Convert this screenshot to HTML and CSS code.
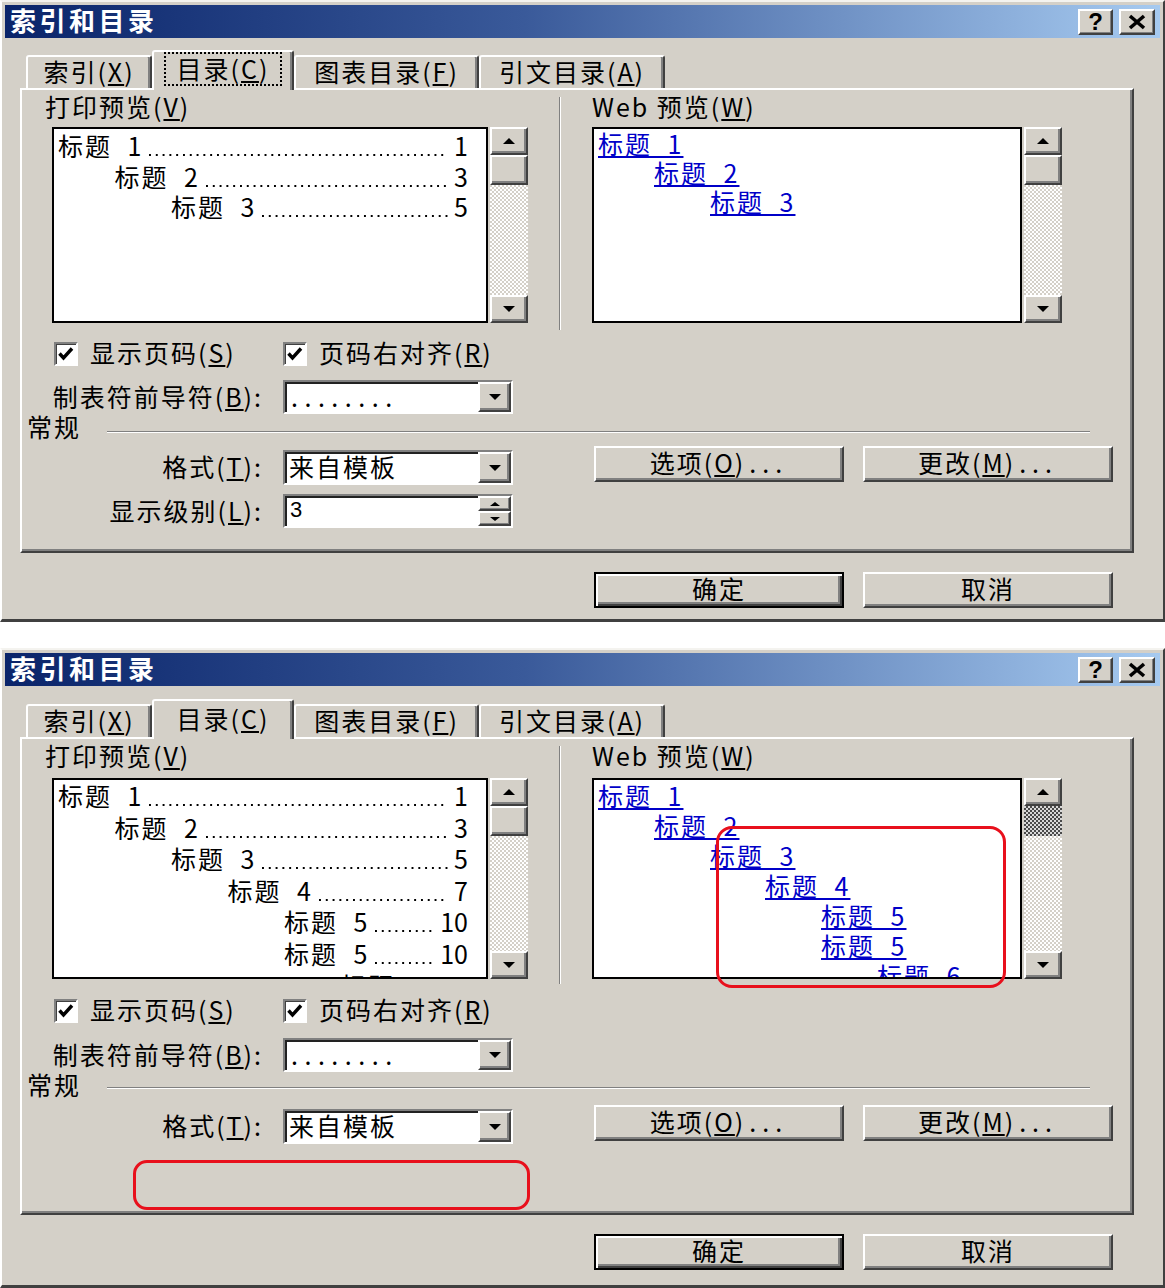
FILE: index.html
```html
<!DOCTYPE html>
<html lang="zh-CN">
<head>
<meta charset="utf-8">
<title>索引和目录</title>
<link rel="stylesheet" href="styles.css">
</head>
<body>
<div class="dialog d1">
  <div class="titlebar">
    <span class="title">索引和目录</span>
    <div class="tb-btns">
      <span class="tb-btn help">?</span>
      <span class="tb-btn close"><svg width="18" height="16" viewBox="0 0 18 16"><path d="M2 2L16 14M16 2L2 14" stroke="#000" stroke-width="3.6"/></svg></span>
    </div>
  </div>
  <div class="tabs">
    <div class="tab t1">索引(<u>X</u>)</div>
    <div class="tab t2 sel"><span class="focus">目录(<u>C</u>)</span></div>
    <div class="tab t3">图表目录(<u>F</u>)</div>
    <div class="tab t4">引文目录(<u>A</u>)</div>
  </div>
  <div class="panel">
    <div class="previews">
      <div class="pcol left">
        <div class="plabel">打印预览(<u>V</u>)</div>
        <div class="listwrap">
          <div class="listbox">
            <ul class="plist">
              <li class="pitem lv0"><span class="nm">标题 1</span><span class="lead"></span><span class="pg">1</span></li>
              <li class="pitem lv1"><span class="nm">标题 2</span><span class="lead"></span><span class="pg">3</span></li>
              <li class="pitem lv2"><span class="nm">标题 3</span><span class="lead"></span><span class="pg">5</span></li>
            </ul>
          </div>
          <div class="sb">
            <div class="sb-btn"><i class="tri-up"></i></div>
            <div class="sb-thumb"></div>
            <div class="sb-track"></div>
            <div class="sb-btn"><i class="tri-dn"></i></div>
          </div>
        </div>
      </div>
      <div class="vsep"></div>
      <div class="pcol right">
        <div class="plabel">Web 预览(<u>W</u>)</div>
        <div class="listwrap">
          <div class="listbox web">
            <ul class="wlist">
              <li class="witem lv0"><a>标题 1</a></li>
              <li class="witem lv1"><a>标题 2</a></li>
              <li class="witem lv2"><a>标题 3</a></li>
            </ul>
          </div>
          <div class="sb">
            <div class="sb-btn"><i class="tri-up"></i></div>
            <div class="sb-thumb"></div>
            <div class="sb-track"></div>
            <div class="sb-btn"><i class="tri-dn"></i></div>
          </div>
        </div>
      </div>
    </div>
    <div class="cbrow">
      <div class="cb cb1"><span class="cbox"><svg width="20" height="20" viewBox="0 0 20 20"><path d="M3.5 9.5L7.5 14L16 4.5" fill="none" stroke="#000" stroke-width="3.4"/></svg></span><span class="cbl">显示页码(<u>S</u>)</span></div>
      <div class="cb cb2"><span class="cbox"><svg width="20" height="20" viewBox="0 0 20 20"><path d="M3.5 9.5L7.5 14L16 4.5" fill="none" stroke="#000" stroke-width="3.4"/></svg></span><span class="cbl">页码右对齐(<u>R</u>)</span></div>
    </div>
    <div class="frow r-leader">
      <span class="flabel">制表符前导符(<u>B</u>):</span>
      <div class="combo"><span class="cval dots">........</span><span class="cbtn"><i class="tri-dn"></i></span></div>
    </div>
    <div class="genrow"><span class="gen">常规</span><span class="hline"></span></div>
    <div class="frow r-fmt">
      <span class="flabel">格式(<u>T</u>):</span>
      <div class="combo"><span class="cval">来自模板</span><span class="cbtn"><i class="tri-dn"></i></span></div>
      <div class="btns"><span class="btn">选项(<u>O</u>)<span class="ell">...</span></span><span class="btn">更改(<u>M</u>)<span class="ell">...</span></span></div>
    </div>
    <div class="frow r-lvl">
      <span class="flabel">显示级别(<u>L</u>):</span>
      <div class="combo spin"><span class="cval num">3</span><span class="spbtns"><span class="spb"><i class="tri-up sm"></i></span><span class="spb"><i class="tri-dn sm"></i></span></span></div>
    </div>
  </div>
  <div class="footer">
    <span class="btn default">确定</span>
    <span class="btn">取消</span>
  </div>
</div>

<div class="gap"></div>

<div class="dialog d2">
  <div class="titlebar">
    <span class="title">索引和目录</span>
    <div class="tb-btns">
      <span class="tb-btn help">?</span>
      <span class="tb-btn close"><svg width="18" height="16" viewBox="0 0 18 16"><path d="M2 2L16 14M16 2L2 14" stroke="#000" stroke-width="3.6"/></svg></span>
    </div>
  </div>
  <div class="tabs">
    <div class="tab t1">索引(<u>X</u>)</div>
    <div class="tab t2 sel"><span class="nofocus">目录(<u>C</u>)</span></div>
    <div class="tab t3">图表目录(<u>F</u>)</div>
    <div class="tab t4">引文目录(<u>A</u>)</div>
  </div>
  <div class="panel">
    <div class="previews">
      <div class="pcol left">
        <div class="plabel">打印预览(<u>V</u>)</div>
        <div class="listwrap">
          <div class="listbox">
            <ul class="plist">
              <li class="pitem lv0"><span class="nm">标题 1</span><span class="lead"></span><span class="pg">1</span></li>
              <li class="pitem lv1"><span class="nm">标题 2</span><span class="lead"></span><span class="pg">3</span></li>
              <li class="pitem lv2"><span class="nm">标题 3</span><span class="lead"></span><span class="pg">5</span></li>
              <li class="pitem lv3"><span class="nm">标题 4</span><span class="lead"></span><span class="pg">7</span></li>
              <li class="pitem lv4"><span class="nm">标题 5</span><span class="lead"></span><span class="pg">10</span></li>
              <li class="pitem lv4"><span class="nm">标题 5</span><span class="lead"></span><span class="pg">10</span></li>
              <li class="pitem lv5"><span class="nm">标题 6</span><span class="lead"></span><span class="pg">12</span></li>
            </ul>
          </div>
          <div class="sb">
            <div class="sb-btn"><i class="tri-up"></i></div>
            <div class="sb-thumb"></div>
            <div class="sb-track"></div>
            <div class="sb-btn"><i class="tri-dn"></i></div>
          </div>
        </div>
      </div>
      <div class="vsep"></div>
      <div class="pcol right">
        <div class="plabel">Web 预览(<u>W</u>)</div>
        <div class="listwrap">
          <div class="listbox web">
            <ul class="wlist">
              <li class="witem lv0"><a>标题 1</a></li>
              <li class="witem lv1"><a>标题 2</a></li>
              <li class="witem lv2"><a>标题 3</a></li>
              <li class="witem lv3"><a>标题 4</a></li>
              <li class="witem lv4"><a>标题 5</a></li>
              <li class="witem lv4"><a>标题 5</a></li>
              <li class="witem lv5"><a>标题 6</a></li>
            </ul>
          </div>
          <div class="sb">
            <div class="sb-btn"><i class="tri-up"></i></div>
            <div class="sb-thumb dither"></div>
            <div class="sb-track"></div>
            <div class="sb-btn"><i class="tri-dn"></i></div>
          </div>
        </div>
      </div>
    </div>
    <div class="cbrow">
      <div class="cb cb1"><span class="cbox"><svg width="20" height="20" viewBox="0 0 20 20"><path d="M3.5 9.5L7.5 14L16 4.5" fill="none" stroke="#000" stroke-width="3.4"/></svg></span><span class="cbl">显示页码(<u>S</u>)</span></div>
      <div class="cb cb2"><span class="cbox"><svg width="20" height="20" viewBox="0 0 20 20"><path d="M3.5 9.5L7.5 14L16 4.5" fill="none" stroke="#000" stroke-width="3.4"/></svg></span><span class="cbl">页码右对齐(<u>R</u>)</span></div>
    </div>
    <div class="frow r-leader">
      <span class="flabel">制表符前导符(<u>B</u>):</span>
      <div class="combo"><span class="cval dots">........</span><span class="cbtn"><i class="tri-dn"></i></span></div>
    </div>
    <div class="genrow"><span class="gen">常规</span><span class="hline"></span></div>
    <div class="frow r-fmt">
      <span class="flabel">格式(<u>T</u>):</span>
      <div class="combo"><span class="cval">来自模板</span><span class="cbtn"><i class="tri-dn"></i></span></div>
      <div class="btns"><span class="btn">选项(<u>O</u>)<span class="ell">...</span></span><span class="btn">更改(<u>M</u>)<span class="ell">...</span></span></div>
    </div>
  </div>
  <div class="footer">
    <span class="btn default">确定</span>
    <span class="btn">取消</span>
  </div>
  <div class="mark mark-web"></div>
  <div class="mark mark-lvl"></div>
</div>
</body>
</html>
```
FILE: styles.css
```css
* { box-sizing: border-box; }

html, body { margin: 0; padding: 0; background: #fff; }

body {
  width: 1165px;
  font-family: "Noto Sans CJK SC", "Liberation Sans", sans-serif;
  font-size: 25px;
  letter-spacing: 2px;
  color: #000;
}

u { text-decoration: underline; text-underline-offset: 2px; text-decoration-thickness: 2px; }

.dialog {
  position: relative;
  width: 1165px;
  background: #d4d0c8;
  border: 2px solid;
  border-color: #f4f3ef #404040 #404040 #fff;
  border-bottom-width: 3px;
  padding: 3px 3px var(--pad-b);
}

.d1 {
  --tabs-mt: 12px; --panel-h: 465px; --list-h: 196px; --list-mt: 7px;
  --cb-mt: 19px; --r1-mt: 14px; --gen-h: 32px; --gen-line: 17px;
  --plh: 30.5px; --ppt: 1px; --wlh: 29px; --wpt: 0px; --pad-b: 11px; --sep-h: 233px;
}
.d2 {
  --tabs-mt: 13px; --panel-h: 478px; --list-h: 201px; --list-mt: 9px;
  --cb-mt: 20px; --r1-mt: 15px; --gen-h: 33px; --gen-line: 15px;
  --plh: 31.6px; --ppt: 0px; --wlh: 30px; --wpt: 0px; --pad-b: 15px; --sep-h: 238px;
}

.gap { height: 26px; }

/* title bar */
.titlebar {
  height: 33px;
  display: flex;
  align-items: center;
  justify-content: space-between;
  padding: 0 5px;
  background: linear-gradient(to right, #0a246a 0%, #3a5a9a 45%, #a6caf0 100%);
}
.title {
  color: #fff;
  font-weight: 700;
  font-size: 26px;
  letter-spacing: 3.5px;
  line-height: 30px;
  padding-bottom: 3px;
}
.tb-btns { display: flex; gap: 6px; }
.tb-btn {
  width: 36px;
  height: 26px;
  background: #d4d0c8;
  border: 2px solid;
  border-color: #fff #404040 #404040 #fff;
  box-shadow: inset -1px -1px 0 #808080;
  display: flex;
  align-items: center;
  justify-content: center;
}
.tb-btn.help {
  width: 35px;
  font-family: "Liberation Sans", sans-serif;
  font-weight: 700;
  font-size: 24px;
  letter-spacing: 0;
  line-height: 1;
}

/* tabs */
.tabs {
  display: flex;
  align-items: flex-end;
  height: 38px;
  margin-top: var(--tabs-mt);
  padding-left: 21px;
}
.tab {
  height: 33px;
  display: flex;
  align-items: center;
  justify-content: center;
  padding-bottom: 4px;
  background: #d4d0c8;
  border: 2px solid;
  border-bottom: 0;
  border-color: #fff #404040 transparent #fff;
  border-radius: 3px 3px 0 0;
  box-shadow: inset -2px 0 0 #808080;
  white-space: nowrap;
}
.t1 { width: 126px; }
.t2 { width: 142px; }
.t3 { width: 185px; }
.t4 { width: 186px; }
.tab.sel {
  height: 40px;
  padding-bottom: 5px;
  margin-bottom: -2px;
  position: relative;
  z-index: 1;
}
.focus {
  outline: 2px dotted #000;
  outline-offset: 0;
  padding: 0 11px 1px;
  line-height: 29px;
}
.nofocus { padding: 0 11px; line-height: 30px; }

/* panel */
.panel {
  margin-left: 15px;
  width: 1114px;
  height: var(--panel-h);
  border: 2px solid;
  border-color: #fff #404040 #404040 #fff;
  box-shadow: inset -2px -2px 0 #808080;
}

.previews {
  display: flex;
  align-items: flex-start;
  padding-top: 6px;
}
.pcol.left { margin-left: 23px; width: 483px; }
.pcol.left .listwrap { margin-left: 7px; }
.pcol.right { margin-left: 31px; }
.plabel { height: 24px; line-height: 20px; white-space: nowrap; }
.vsep {
  margin-left: 31px;
  margin-top: 1px;
  margin-bottom: -30px;
  width: 2px;
  height: var(--sep-h);
  border-left: 1px solid #808080;
  border-right: 1px solid #fff;
}

.listwrap {
  display: flex;
  gap: 2px;
  margin-top: var(--list-mt);
  height: var(--list-h);
}
.listbox {
  width: 436px;
  height: 100%;
  background: #fff;
  border: 2px solid #000;
  overflow: hidden;
}
.listbox.web { width: 430px; }

.plist {
  list-style: none;
  margin: 0;
  padding: var(--ppt) 18px 0 4px;
  line-height: var(--plh);
}
.pitem {
  display: flex;
  align-items: baseline;
  white-space: nowrap;
  height: var(--plh);
}
.nm { word-spacing: 8px; }
.lead {
  flex: 1;
  height: 2px;
  margin: 0 6px 0 6px;
  background-image: linear-gradient(to right, #000 2px, transparent 2px);
  background-size: 6.8px 2px;
  background-repeat: repeat-x;
}
.pg { letter-spacing: 0; }

.lv0 { padding-left: 0; }
.lv1 { padding-left: 56.5px; }
.lv2 { padding-left: 113px; }
.lv3 { padding-left: 169.5px; }
.lv4 { padding-left: 226px; }
.lv5 { padding-left: 282.5px; }

.wlist {
  list-style: none;
  margin: 0;
  padding: var(--wpt) 4px 0 4px;
  line-height: var(--wlh);
}
.witem { height: var(--wlh); white-space: nowrap; }
.wlist .lv1 { padding-left: 56px; }
.wlist .lv2 { padding-left: 112px; }
.wlist .lv3 { padding-left: 167px; }
.wlist .lv4 { padding-left: 223px; }
.wlist .lv5 { padding-left: 279px; }
.witem a {
  color: #0000c8;
  text-decoration: underline;
  text-decoration-thickness: 2px;
  text-underline-offset: 2px;
  word-spacing: 8px;
}

/* scrollbar */
.sb {
  width: 38px;
  height: 100%;
  display: flex;
  flex-direction: column;
  background-color: #fff;
  background-image: repeating-conic-gradient(#d4d0c8 0 25%, #fff 0 50%);
  background-size: 4px 4px;
}
.sb-btn, .sb-thumb {
  height: 28px;
  background: #d4d0c8;
  border: 2px solid;
  border-color: #fff #404040 #404040 #fff;
  box-shadow: inset -2px -2px 0 #808080;
  display: flex;
  align-items: center;
  justify-content: center;
}
.sb-thumb { height: 30px; }
.sb-thumb.dither {
  border: 0;
  box-shadow: none;
  background-color: #d4d0c8;
  background-image: repeating-conic-gradient(#4a4a4a 0 25%, #d8d8d8 0 50%);
  background-size: 4px 4px;
}
.sb-track { flex: 1; }

.tri-up, .tri-dn {
  display: block;
  width: 0;
  height: 0;
  border-left: 6px solid transparent;
  border-right: 6px solid transparent;
}
.tri-up { border-bottom: 6px solid #000; }
.tri-dn { border-top: 6px solid #000; }
.tri-up.sm { border-left-width: 5px; border-right-width: 5px; border-bottom-width: 4px; }
.tri-dn.sm { border-left-width: 5px; border-right-width: 5px; border-top-width: 4px; }

/* lower controls */
.cbrow {
  display: flex;
  align-items: center;
  height: 24px;
  margin-top: var(--cb-mt);
}
.cb { display: flex; align-items: center; white-space: nowrap; }
.cb1 { margin-left: 32px; width: 229px; }
.cbox {
  width: 24px;
  height: 24px;
  background: #fff;
  border: 2px solid;
  border-color: #808080 #fff #fff #808080;
  box-shadow: inset 1px 1px 0 #404040;
  display: flex;
}
.cbl { margin-left: 12px; line-height: 20px; padding-bottom: 4px; }

.frow { display: flex; align-items: center; }
.r-leader { margin-top: var(--r1-mt); height: 34px; }
.flabel {
  width: 241px;
  text-align: right;
  white-space: nowrap;
  letter-spacing: 2px;
  padding-bottom: 3px;
}
.combo {
  margin-left: 20px;
  width: 230px;
  height: 34px;
  display: flex;
  background: #fff;
  border: 2px solid;
  border-color: #808080 #fff #fff #808080;
  box-shadow: inset 2px 2px 0 #222;
}
.cval {
  flex: 1;
  padding-left: 4px;
  line-height: 28px;
  white-space: nowrap;
}
.cval.dots { letter-spacing: 6.5px; padding-left: 6px; }
.cval.num { font-family: "Liberation Sans", sans-serif; font-size: 22px; padding-left: 5px; }
.cbtn {
  width: 33px;
  background: #d4d0c8;
  border: 2px solid;
  border-color: #fff #404040 #404040 #fff;
  box-shadow: inset -2px -2px 0 #808080;
  display: flex;
  align-items: center;
  justify-content: center;
}

.genrow {
  display: flex;
  align-items: flex-start;
  height: var(--gen-h);
}
.gen {
  width: 85px;
  padding-left: 5px;
  line-height: 24px;
  white-space: nowrap;
}
.hline {
  flex: 1;
  margin-right: 42px;
  margin-top: var(--gen-line);
  height: 2px;
  border-top: 1px solid #808080;
  border-bottom: 1px solid #fff;
}

.r-fmt { align-items: flex-start; }
.r-fmt .flabel { margin-top: 4px; height: 35px; line-height: 32px; }
.r-fmt .combo { margin-top: 4px; height: 35px; }
.r-fmt .cval { line-height: 29px; }
.btns { display: flex; gap: 19px; margin-left: 81px; }

.r-lvl { margin-top: 9px; height: 34px; }
.spbtns { width: 33px; display: flex; flex-direction: column; }
.spb {
  flex: 1;
  background: #d4d0c8;
  border: 2px solid;
  border-color: #fff #404040 #404040 #fff;
  box-shadow: inset -1px -1px 0 #808080;
  display: flex;
  align-items: center;
  justify-content: center;
}

.btn {
  width: 250px;
  height: 36px;
  padding-bottom: 4px;
  background: #d4d0c8;
  border: 2px solid;
  border-color: #fff #404040 #404040 #fff;
  box-shadow: inset -2px -2px 0 #808080;
  display: flex;
  align-items: center;
  justify-content: center;
  white-space: nowrap;
}
.btn.default {
  border-color: #000;
  box-shadow: inset 2px 2px 0 #fff, inset -2px -2px 0 #404040, inset -4px -4px 0 #808080;
}
.ell { letter-spacing: 6px; margin-left: 4px; }

.footer {
  display: flex;
  gap: 19px;
  margin-top: 19px;
  padding-left: 589px;
}

/* red annotation marks drawn over the screenshot */
.mark {
  position: absolute;
  border: 3px solid #e8101c;
  border-radius: 16px;
  z-index: 5;
  pointer-events: none;
}
.mark-web { left: 714px; top: 176px; width: 290px; height: 162px; }
.mark-lvl { left: 131px; top: 510px; width: 397px; height: 50px; border-radius: 14px; }
```
